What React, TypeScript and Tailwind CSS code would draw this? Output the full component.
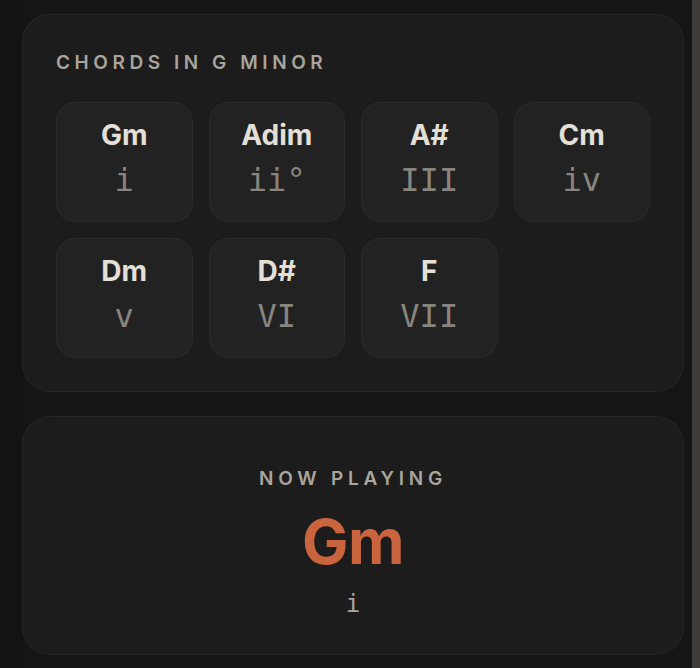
import React from "react";

const chords = [
  { name: "Gm", num: "i" },
  { name: "Adim", num: "ii°" },
  { name: "A#", num: "III" },
  { name: "Cm", num: "iv" },
  { name: "Dm", num: "v" },
  { name: "D#", num: "VI" },
  { name: "F", num: "VII" },
];

const sans = { fontFamily: "Inter, 'Noto Sans', sans-serif" };
const mono = { fontFamily: "'DejaVu Sans Mono', 'Liberation Mono', monospace" };

export default function App() {
  return (
    <div className="w-[700px] h-[668px] bg-[#151515] flex overflow-hidden" style={sans}>
      <div className="w-[22px] shrink-0 bg-[#131313]" />
      <div className="flex-1 pt-[14px] pr-2 flex flex-col gap-[24px]">
        <div className="rounded-[28px] border border-dotted border-[#313131] bg-[#1c1c1c] p-[33px]">
          <div className="text-[19px] leading-[30px] font-semibold tracking-[0.24em] text-[#a9a59d] mb-6">
            CHORDS IN G MINOR
          </div>
          <div className="grid grid-cols-4 gap-4">
            {chords.map((c) => (
              <div
                key={c.name}
                className="h-[120px] rounded-[20px] border border-dotted border-[#353535] bg-[#222222] flex flex-col items-center pt-[15px]"
              >
                <div className="text-[28px] leading-[34px] font-bold text-[#e4e0d8]">{c.name}</div>
                <div className="text-[32px] leading-[40px] text-[#88857e] mt-[8px]" style={mono}>
                  {c.num}
                </div>
              </div>
            ))}
          </div>
        </div>
        <div className="h-[239px] rounded-[28px] border border-dotted border-[#313131] bg-[#1c1c1c] flex flex-col items-center pt-[47px]">
          <div className="text-[19px] leading-[30px] font-semibold tracking-[0.25em] text-[#a9a59d]">
            NOW PLAYING
          </div>
          <div className="text-[62px] leading-[70px] font-bold text-[#c9643f] tracking-[-0.01em] mt-[13px]">Gm</div>
          <div className="text-[24px] leading-[30px] text-[#aaa69e] mt-[12px]" style={mono}>
            i
          </div>
        </div>
      </div>
      <div className="w-2 shrink-0 bg-[#3e3b38]" />
    </div>
  );
}
